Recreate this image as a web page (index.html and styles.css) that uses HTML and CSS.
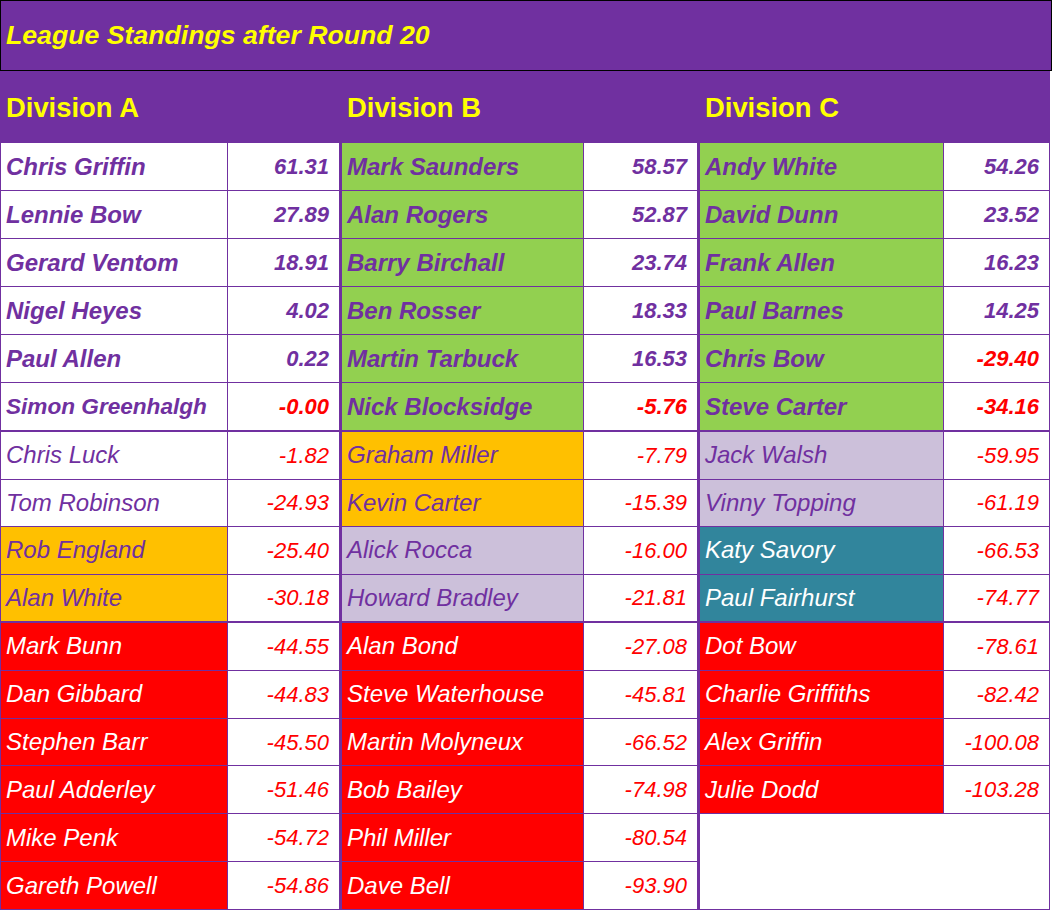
FILE: index.html
```html
<!DOCTYPE html>
<html>
<head>
<meta charset="utf-8">
<title>League Standings</title>
<link rel="stylesheet" href="styles.css">
</head>
<body>
<div class="sheet">
  <div class="title">League Standings after Round 20</div>
  <div class="board">
    <div class="division div-a">
      <div class="head">Division A</div>
      <div class="group g6">
        <div class="n b w">Chris Griffin</div><div class="s b">61.31</div>
        <div class="n b w">Lennie Bow</div><div class="s b">27.89</div>
        <div class="n b w">Gerard Ventom</div><div class="s b">18.91</div>
        <div class="n b w">Nigel Heyes</div><div class="s b">4.02</div>
        <div class="n b w">Paul Allen</div><div class="s b">0.22</div>
        <div class="n b w tight">Simon Greenhalgh</div><div class="s b neg">-0.00</div>
      </div>
      <div class="group g4">
        <div class="n w">Chris Luck</div><div class="s neg">-1.82</div>
        <div class="n w">Tom Robinson</div><div class="s neg">-24.93</div>
        <div class="n o">Rob England</div><div class="s neg">-25.40</div>
        <div class="n o">Alan White</div><div class="s neg">-30.18</div>
      </div>
      <div class="group g6b">
        <div class="n r">Mark Bunn</div><div class="s neg">-44.55</div>
        <div class="n r">Dan Gibbard</div><div class="s neg">-44.83</div>
        <div class="n r">Stephen Barr</div><div class="s neg">-45.50</div>
        <div class="n r">Paul Adderley</div><div class="s neg">-51.46</div>
        <div class="n r">Mike Penk</div><div class="s neg">-54.72</div>
        <div class="n r">Gareth Powell</div><div class="s neg">-54.86</div>
      </div>
    </div>
    <div class="division div-b">
      <div class="head">Division B</div>
      <div class="group g6">
        <div class="n b g">Mark Saunders</div><div class="s b">58.57</div>
        <div class="n b g">Alan Rogers</div><div class="s b">52.87</div>
        <div class="n b g">Barry Birchall</div><div class="s b">23.74</div>
        <div class="n b g">Ben Rosser</div><div class="s b">18.33</div>
        <div class="n b g">Martin Tarbuck</div><div class="s b">16.53</div>
        <div class="n b g">Nick Blocksidge</div><div class="s b neg">-5.76</div>
      </div>
      <div class="group g4">
        <div class="n o">Graham Miller</div><div class="s neg">-7.79</div>
        <div class="n o">Kevin Carter</div><div class="s neg">-15.39</div>
        <div class="n l">Alick Rocca</div><div class="s neg">-16.00</div>
        <div class="n l">Howard Bradley</div><div class="s neg">-21.81</div>
      </div>
      <div class="group g6b">
        <div class="n r">Alan Bond</div><div class="s neg">-27.08</div>
        <div class="n r">Steve Waterhouse</div><div class="s neg">-45.81</div>
        <div class="n r">Martin Molyneux</div><div class="s neg">-66.52</div>
        <div class="n r">Bob Bailey</div><div class="s neg">-74.98</div>
        <div class="n r">Phil Miller</div><div class="s neg">-80.54</div>
        <div class="n r">Dave Bell</div><div class="s neg">-93.90</div>
      </div>
    </div>
    <div class="division div-c">
      <div class="head">Division C</div>
      <div class="group g6">
        <div class="n b g">Andy White</div><div class="s b">54.26</div>
        <div class="n b g">David Dunn</div><div class="s b">23.52</div>
        <div class="n b g">Frank Allen</div><div class="s b">16.23</div>
        <div class="n b g">Paul Barnes</div><div class="s b">14.25</div>
        <div class="n b g">Chris Bow</div><div class="s b neg">-29.40</div>
        <div class="n b g">Steve Carter</div><div class="s b neg">-34.16</div>
      </div>
      <div class="group g4">
        <div class="n l">Jack Walsh</div><div class="s neg">-59.95</div>
        <div class="n l">Vinny Topping</div><div class="s neg">-61.19</div>
        <div class="n t">Katy Savory</div><div class="s neg">-66.53</div>
        <div class="n t">Paul Fairhurst</div><div class="s neg">-74.77</div>
      </div>
      <div class="group g6b">
        <div class="n r">Dot Bow</div><div class="s neg">-78.61</div>
        <div class="n r">Charlie Griffiths</div><div class="s neg">-82.42</div>
        <div class="n r">Alex Griffin</div><div class="s neg">-100.08</div>
        <div class="n r">Julie Dodd</div><div class="s neg">-103.28</div>
        <div class="blank"></div>
      </div>
    </div>
  </div>
</div>
</body>
</html>
```
FILE: styles.css
```css
html, body {
  margin: 0;
  padding: 0;
  background: #ffffff;
}

.sheet {
  width: 1052px;
  font-family: "Liberation Sans", Arial, sans-serif;
}

.title {
  box-sizing: border-box;
  width: 1052px;
  height: 71px;
  border: 1px solid #000000;
  background: #7030A0;
  color: #FFFF00;
  font-size: 26.67px;
  font-weight: bold;
  font-style: italic;
  display: flex;
  align-items: center;
  padding-left: 5px;
}

.board {
  box-sizing: border-box;
  width: 1050px;
  display: flex;
  gap: 3px;
  background: #7030A0;
  padding: 0 1px 1px 1px;
}

.division {
  display: flex;
  flex-direction: column;
  gap: 2px;
}

.div-a { width: 338px; }
.div-b { width: 355px; }
.div-c { width: 349px; }

.div-a .group { grid-template-columns: 226px 111px; }
.div-b .group { grid-template-columns: 241px 113px; }
.div-c .group { grid-template-columns: 243px 105px; }

.head {
  height: 72px;
  margin-bottom: -2px;
  display: flex;
  align-items: center;
  padding-left: 5px;
  padding-top: 1px;
  box-sizing: border-box;
  color: #FFFF00;
  font-size: 27.4px;
  font-weight: bold;
}

.group {
  display: grid;
  column-gap: 1px;
  row-gap: 1px;
}

.g6 { height: 287px; grid-template-rows: repeat(6, 1fr); }
.g4 { height: 189px; grid-template-rows: repeat(4, 1fr); }
.g6b { height: 286px; grid-template-rows: repeat(6, 1fr); }

.n, .s {
  display: flex;
  align-items: center;
  font-style: italic;
  white-space: nowrap;
  overflow: hidden;
}

.n {
  padding-left: 5px;
  font-size: 24px;
  color: #7030A0;
}

.tight { font-size: 22.6px; }

.s {
  justify-content: flex-end;
  padding-right: 10px;
  padding-top: 1px;
  font-size: 22px;
  background: #ffffff;
  color: #7030A0;
}

.b { font-weight: bold; }
.neg { color: #FF0000; }

.w { background: #ffffff; }
.g { background: #92D050; }
.o { background: #FFC000; }
.l { background: #CCC0DA; }
.t { background: #31859C; color: #ffffff; }
.r { background: #FF0000; color: #ffffff; }

.blank {
  grid-column: 1 / span 2;
  grid-row: span 2;
  background: #ffffff;
}
```
